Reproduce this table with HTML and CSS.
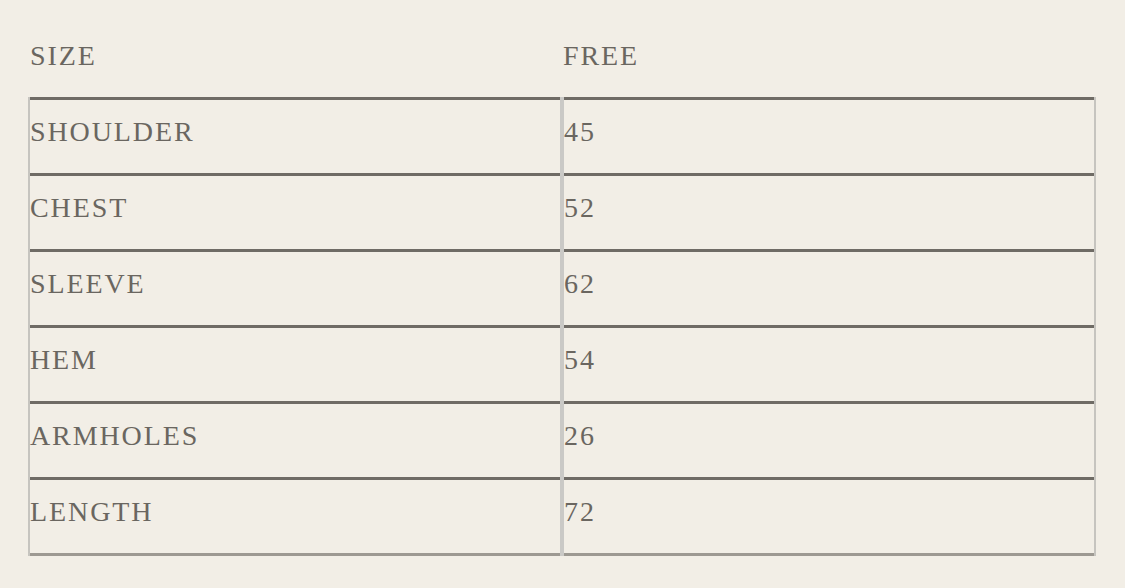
FILE: index.html
```html
<!DOCTYPE html>
<html>
<head>
<meta charset="utf-8">
<link rel="stylesheet" href="styles.css">
</head>
<body>
<div class="page">
  <table class="size-table">
    <thead>
      <tr>
        <th class="col-label">SIZE</th>
        <th class="col-value">FREE</th>
      </tr>
    </thead>
    <tbody>
      <tr><td class="col-label">SHOULDER</td><td class="col-value">45</td></tr>
      <tr><td class="col-label">CHEST</td><td class="col-value">52</td></tr>
      <tr><td class="col-label">SLEEVE</td><td class="col-value">62</td></tr>
      <tr><td class="col-label">HEM</td><td class="col-value">54</td></tr>
      <tr><td class="col-label">ARMHOLES</td><td class="col-value">26</td></tr>
      <tr><td class="col-label">LENGTH</td><td class="col-value">72</td></tr>
    </tbody>
  </table>
</div>
</body>
</html>
```

FILE: styles.css
```css
html, body {
  margin: 0;
  padding: 0;
  background: #f2eee6;
}

.page {
  padding-left: 28px;
  font-family: "Liberation Serif", "Times New Roman", serif;
  color: #6a6660;
}

.size-table {
  border-collapse: separate;
  border-spacing: 0;
  width: 1068px;
  table-layout: fixed;
}

.size-table th,
.size-table td {
  font-size: 28px;
  line-height: 28px;
  letter-spacing: 1.9px;
  font-weight: normal;
  text-align: left;
  padding: 0;
  vertical-align: top;
}

.size-table th {
  padding-top: 42px;
  padding-bottom: 27px;
}

.size-table th.col-label {
  width: 530px;
  padding-left: 2px;
}

.size-table th.col-value {
  padding-left: 3px;
}

.size-table td {
  padding-top: 21px;
  padding-bottom: 27px;
  box-shadow: inset 0 3px 0 #6f6b65;
}

.size-table td.col-label {
  border-left: 2px solid #c6c4bf;
}

.size-table td.col-value {
  border-left: 4px solid #cac9c6;
  border-right: 2px solid #c6c4bf;
}

.size-table tbody tr:last-child td {
  padding-bottom: 30px;
  box-shadow: inset 0 3px 0 #6f6b65, inset 0 -3px 0 #9d9992;
}
```
